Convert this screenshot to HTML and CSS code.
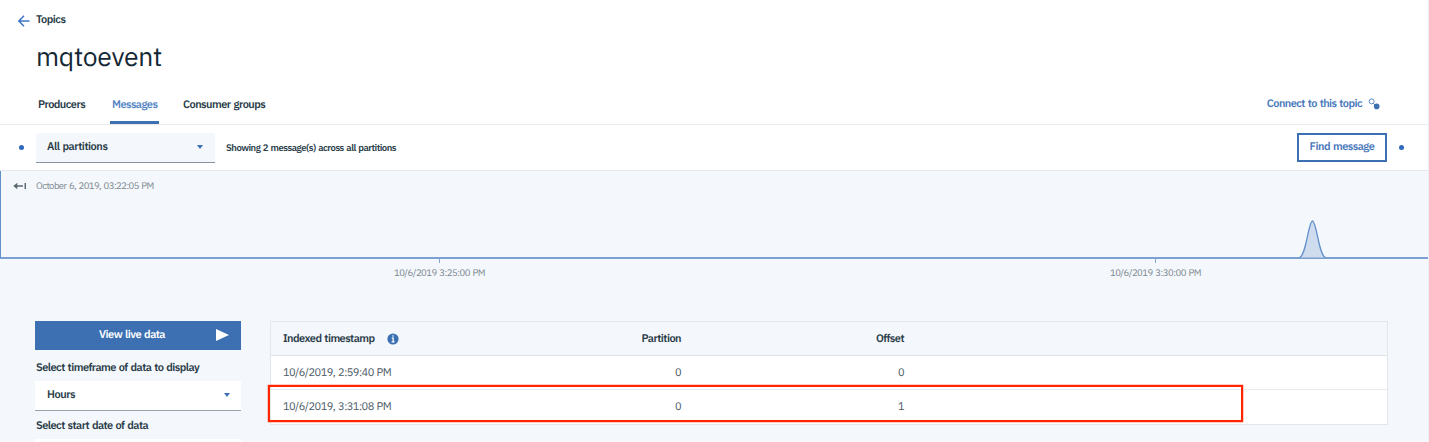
FILE: index.html
```html
<!DOCTYPE html>
<html lang="en">
<head>
<meta charset="utf-8">
<title>mqtoevent</title>
<link rel="stylesheet" href="styles.css">
</head>
<body>
<div class="page">
  <header class="header">
    <a class="back">
      <svg class="back-icon" width="12" height="12" viewBox="0 0 12 12"><path d="M11.5 6H1.2M6 .8.9 6 6 11.2" fill="none" stroke="#3e74c4" stroke-width="1.5"/></svg>
      <span class="back-text">Topics</span>
    </a>
    <h1 class="title">mqtoevent</h1>
    <nav class="tabs">
      <a class="tab producers">Producers</a>
      <a class="tab messages active">Messages</a>
      <a class="tab groups">Consumer groups</a>
      <a class="connect"><span class="connect-text">Connect to this topic</span>
        <svg width="12" height="12" viewBox="0 0 12 12"><circle cx="3.6" cy="3.4" r="2.5" fill="none" stroke="#5f8ac6"/><path d="M5 5l2 2" stroke="#5f8ac6"/><circle cx="8.7" cy="8.4" r="2.8" fill="#3d70b2"/></svg>
      </a>
    </nav>
  </header>
  <section class="toolbar">
    <i class="dot"></i>
    <div class="select partitions"><span class="partitions-text">All partitions</span><i class="caret"></i></div>
    <span class="summary">Showing 2 message(s) across all partitions</span>
    <button class="find">Find message</button>
    <i class="dot"></i>
  </section>
  <section class="timeline">
    <div class="chart">
      <svg class="oldest" width="13" height="8" viewBox="0 0 13 8"><path d="M2 4h8M12.3 1v6" fill="none" stroke="#5a6872" stroke-width="1.5"/><path d="M.3 4l4-3.2v6.4z" fill="#5a6872"/></svg>
      <span class="start">October 6, 2019, 03:22:05 PM</span>
      <svg class="peak" width="28" height="38" viewBox="0 0 28 38"><path d="M.5 37.5C7 36.5 9.5 1 13.5 1S20 36.5 26.5 37.5" fill="#cfdcee" stroke="#6491cd" stroke-width="1.3"/></svg>
    </div>
    <div class="axis">
      <div class="tick"><span>10/6/2019 3:25:00 PM</span></div>
      <div class="tick"><span>10/6/2019 3:30:00 PM</span></div>
    </div>
  </section>
  <main class="content">
    <aside class="filters">
      <button class="live"><span>View live data</span><svg width="13" height="12" viewBox="0 0 13 12"><path d="M0 0l13 6-13 6z" fill="#fff"/></svg></button>
      <label class="label timeframe">Select timeframe of data to display</label>
      <div class="select hours"><span>Hours</span><i class="caret"></i></div>
      <label class="label startdate">Select start date of data</label>
      <div class="select date"></div>
    </aside>
    <div class="table-wrap">
      <div class="table">
        <div class="row head"><span class="time"><span class="time-title">Indexed timestamp</span>
          <svg width="12" height="12" viewBox="0 0 12 12"><circle cx="6" cy="6" r="5.6" fill="#3d70b2"/><path d="M6 2.3v1.5M4.8 5.2h1.4v3.3M4.6 8.8h3" fill="none" stroke="#fff" stroke-width="1.2"/></svg></span><span class="part">Partition</span><span class="off">Offset</span></div>
        <div class="row"><span class="time">10/6/2019, 2:59:40 PM</span><span class="part">0</span><span class="off">0</span></div>
        <div class="row"><span class="time">10/6/2019, 3:31:08 PM</span><span class="part">0</span><span class="off">1</span></div>
      </div>
      <div class="highlight"></div>
    </div>
  </main>
</div>
</body>
</html>
```
FILE: styles.css
```css
* { box-sizing: border-box; }
body { margin: 0; background: #f4f7fb; color: #2a3d49; font: 11px/16px "IBM Plex Sans", Roboto, sans-serif; letter-spacing: -.54px; word-spacing: .8px; text-rendering: geometricPrecision; }
button { font: inherit; letter-spacing: inherit; word-spacing: inherit; text-rendering: inherit; margin: 0; padding: 0; border: 0; }
svg { display: block; flex: none; }
.page { width: 1429px; height: 442px; overflow: hidden; border-right: 1px solid #edf0f4; white-space: nowrap; }
.header { height: 125px; background: #fff; border-bottom: 1px solid #e8eaec; display: flex; flex-direction: column; }
.back { display: flex; height: 28px; padding: 12px 0 0 18px; gap: 6px; font-weight: 600; }
.back-icon { margin-top: 3px; }
.title { margin: 9px 0 0 36px; font-size: 26.5px; line-height: 40px; font-weight: 400; height: 40px; color: #152935; letter-spacing: -.3px; }
.tabs { display: flex; margin-top: 11px; height: 36px; padding-left: 36px; font-weight: 600; }
.tab { height: 36px; padding-top: 9px; }
.producers { width: 74px; padding-left: 2px; }
.messages { width: 49px; padding-left: 2px; color: #5486c5; border-bottom: 3px solid #3d70b2; }
.groups { margin-left: 24px; }
.connect { display: flex; margin-left: auto; margin-right: 48px; gap: 6px; padding-top: 8px; color: #4a7abb; }
.connect-text { letter-spacing: -.57px; }
.connect svg { margin-top: 2px; }
.toolbar { height: 46px; background: #fff; border-bottom: 1px solid #e5e9ed; display: flex; align-items: center; padding: 0 24px 0 19px; font-weight: 600; }
.dot { width: 5px; height: 5px; border-radius: 50%; background: #2e69be; flex: none; }
.select { display: flex; align-items: center; justify-content: space-between; padding: 0 11px; font-weight: 600; }
.partitions { width: 179px; height: 30px; margin-left: 12px; padding-right: 12px; background: #f4f7fb; border-bottom: 1px solid #8793a0; letter-spacing: -.45px; }
.caret { border: 3.5px solid transparent; border-top: 4px solid #3d70b2; border-bottom: 0; }
.summary { margin-left: 11px; font-size: 9.5px; letter-spacing: -.5px; }
.find { width: 90px; height: 29px; margin: 0 12px 0 auto; border: 2px solid #3d70b2; background: #fff; color: #4a7abb; font-weight: 600; line-height: 24px; padding-bottom: 1px; letter-spacing: -.5px; }
.timeline { height: 150px; }
.chart { height: 88px; border-left: 1px solid #6391cc; border-bottom: 2px solid #7ba1d2; display: flex; padding: 7px 101px 0 12px; color: #7b8790; font-size: 9.5px; letter-spacing: -.56px; }
.oldest { margin-top: 4px; }
.start { margin-left: 10px; }
.peak { margin: 42px 0 0 auto; }
.axis { display: flex; padding-left: 389px; gap: 616px; color: #7b8790; font-size: 9.5px; letter-spacing: -.48px; }
.tick { width: 101px; margin-right: -1px; text-align: center; }
.tick::before { content: ""; display: block; width: 1px; height: 4px; margin: 0 auto 2px; background: #83a6d2; }
.content { display: flex; padding-left: 35px; gap: 29px; }
.filters { width: 206px; display: flex; flex-direction: column; }
.live { display: flex; align-items: center; justify-content: flex-end; gap: 51px; padding: 0 12px 2px 0; height: 29px; background: #3d70b2; color: #fff; font-weight: 600; letter-spacing: -.5px; }
.label { font-weight: 600; padding-left: 1px; }
.timeframe { margin-top: 10px; }
.hours { margin-top: 5px; height: 30px; background: #fff; border-bottom: 1px solid #98a2ab; padding: 0 11px 1px 12px; letter-spacing: -.45px; }
.startdate { margin-top: 7px; }
.date { margin-top: 5px; height: 30px; background: #fff; }
.table-wrap { position: relative; width: 1118px; height: 104px; }
.table { border: 1px solid #e2e7ec; background: #fff; }
.row { height: 34px; display: flex; align-items: center; padding: 0 0 0 12px; border-bottom: 1px solid #e7ebef; color: #4b5a65; }
.row:last-child { border-bottom: 0; }
.head { background: #f4f7fb; border-bottom: 1px solid #dfe3e7; font-weight: 600; color: #2a3d49; }
.time { display: flex; gap: 12px; width: 298px; align-items: center; }
.time svg { margin-top: 1px; }
.part { width: 100px; text-align: right; }
.off { width: 223px; text-align: right; }
.highlight { position: absolute; left: -2px; top: 64px; width: 975px; height: 37px; border: 2px solid #ff2600; box-shadow: 0 0 0 .4px #ff7f6b; }
```
